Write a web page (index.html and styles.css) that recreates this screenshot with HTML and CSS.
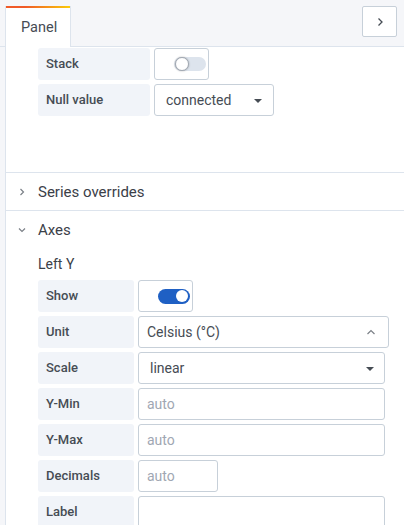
FILE: index.html
```html
<!DOCTYPE html>
<html>
<head>
<meta charset="utf-8">
<link rel="stylesheet" href="styles.css">
</head>
<body>
<div class="header">
  <div class="tab">Panel</div>
  <button class="collapse" type="button" aria-label="Collapse">
    <svg width="10" height="10" viewBox="0 0 10 10"><path d="M3.5 1.5 L7 5 L3.5 8.5" fill="none" stroke="#464c54" stroke-width="1.3"/></svg>
  </button>
</div>
<div class="content">
  <div class="group group-top">
    <div class="row">
      <div class="label w112">Stack</div>
      <div class="box switch"><span class="track"><span class="knob"></span></span></div>
    </div>
    <div class="row">
      <div class="label w112">Null value</div>
      <div class="box select null-select"><span class="val">connected</span><span class="caret"></span></div>
    </div>
  </div>
  <div class="section">
    <svg class="chev" width="16" height="16" viewBox="0 0 16 16"><path d="M6.5 5 L9.5 8 L6.5 11" fill="none" stroke="#7b8087" stroke-width="1.2"/></svg>
    <span>Series overrides</span>
  </div>
  <div class="section">
    <svg class="chev" width="16" height="16" viewBox="0 0 16 16"><path d="M5 6.5 L8 9.5 L11 6.5" fill="none" stroke="#7b8087" stroke-width="1.2"/></svg>
    <span>Axes</span>
  </div>
  <div class="group group-axes">
    <div class="subtitle">Left Y</div>
    <div class="row">
      <div class="label w96">Show</div>
      <div class="box switch on"><span class="track"><span class="knob"></span></span></div>
    </div>
    <div class="row">
      <div class="label w96">Unit</div>
      <div class="box select unit-select"><span class="val">Celsius (°C)</span>
        <svg class="up" width="10" height="6" viewBox="0 0 10 6"><path d="M1.5 5 L5 1.5 L8.5 5" fill="none" stroke="#7b8087" stroke-width="1.2"/></svg>
      </div>
    </div>
    <div class="row">
      <div class="label w96">Scale</div>
      <div class="box select scale-select"><span class="val">linear</span><span class="caret"></span></div>
    </div>
    <div class="row">
      <div class="label w96">Y-Min</div>
      <div class="box input wide"><span class="ph">auto</span></div>
    </div>
    <div class="row">
      <div class="label w96">Y-Max</div>
      <div class="box input wide"><span class="ph">auto</span></div>
    </div>
    <div class="row">
      <div class="label w96">Decimals</div>
      <div class="box input narrow"><span class="ph">auto</span></div>
    </div>
    <div class="row">
      <div class="label w96">Label</div>
      <div class="box input wide"></div>
    </div>
  </div>
</div>
</body>
</html>
```

FILE: styles.css
```css
html, body {
  margin: 0;
  padding: 0;
}
body {
  background: #f5f6f9;
  font-family: Roboto, "Liberation Sans", sans-serif;
  color: #464c54;
  width: 404px;
  height: 525px;
  overflow: hidden;
}
.header {
  height: 47px;
  border-bottom: 1px solid #dde4ed;
  display: flex;
  align-items: flex-start;
  justify-content: space-between;
  padding: 6px 7px 0 5px;
  box-sizing: border-box;
}
.tab {
  width: 66px;
  height: 41px;
  box-sizing: border-box;
  border-left: 1px solid #dde4ed;
  border-right: 1px solid #dde4ed;
  background: linear-gradient(to right, #f05a28 30%, #fbca0a 99%) top left / 100% 2px no-repeat, #ffffff;
  padding: 12px 0 0 15px;
  font-size: 14.5px;
  line-height: 20px;
  position: relative;
  z-index: 1;
}
.collapse {
  width: 35px;
  height: 31px;
  border: 1px solid #c7d0d9;
  border-radius: 2px;
  background: #fff;
  padding: 0;
  display: flex;
  align-items: center;
  justify-content: center;
}
.content {
  margin-left: 5px;
  border-left: 1px solid #dde4ed;
  background: #fff;
  height: 478px;
}
.group {
  padding-left: 32px;
  display: flex;
  flex-direction: column;
  gap: 4px;
}
.group-top {
  padding-top: 1px;
  height: 125px;
  box-sizing: border-box;
}
.row {
  display: flex;
  gap: 4px;
  height: 32px;
}
.label {
  background: #f1f4f9;
  border-radius: 3px;
  padding: 0 8px;
  font-size: 13px;
  font-weight: 500;
  line-height: 32px;
  box-sizing: border-box;
}
.w112 { width: 112px; }
.w96 { width: 96px; }
.box {
  height: 32px;
  border: 1px solid #c7d0d9;
  border-radius: 3px;
  box-sizing: border-box;
  background: #fff;
  display: flex;
  align-items: center;
  font-size: 14px;
}
.switch {
  width: 55px;
  padding-left: 19px;
}
.track {
  width: 32px;
  height: 14px;
  border-radius: 7px;
  background: #dde4ed;
  position: relative;
}
.knob {
  position: absolute;
  left: 1px;
  top: 0px;
  width: 12px;
  height: 12px;
  border-radius: 50%;
  background: #fff;
  border: 1px solid #a0a7b1;
  box-shadow: 0 0 2px rgba(0,0,0,0.3);
}
.switch.on .track {
  background: #1f60c4;
  height: 15px;
  border-radius: 8px;
}
.switch.on .knob {
  left: 18px;
  top: 1.5px;
  width: 12px;
  height: 12px;
  border: none;
  box-shadow: none;
}
.select {
  justify-content: space-between;
}
.null-select {
  width: 120px;
  padding: 0 11px 0 11px;
}
.unit-select {
  width: 251px;
  padding: 0 12px 0 8px;
}
.scale-select {
  width: 247px;
  padding: 0 10px 0 11px;
}
.caret {
  width: 0;
  height: 0;
  border-left: 4px solid transparent;
  border-right: 4px solid transparent;
  border-top: 4px solid #464c54;
  margin-top: 2px;
}
.input {
  padding-left: 8px;
}
.wide { width: 247px; }
.narrow { width: 80px; }
.ph { color: #9fa7b3; }
.section {
  border-top: 1px solid #dde4ed;
  height: 38px;
  box-sizing: border-box;
  display: flex;
  align-items: center;
  padding-left: 8px;
  font-size: 15px;
  font-weight: 400;
  color: #3b4048;
}
.chev { margin-right: 8px; }
.subtitle {
  height: 32px;
  line-height: 32px;
  font-size: 14px;
  font-weight: 400;
  color: #3b4048;
  margin-bottom: -4px;
}
```
